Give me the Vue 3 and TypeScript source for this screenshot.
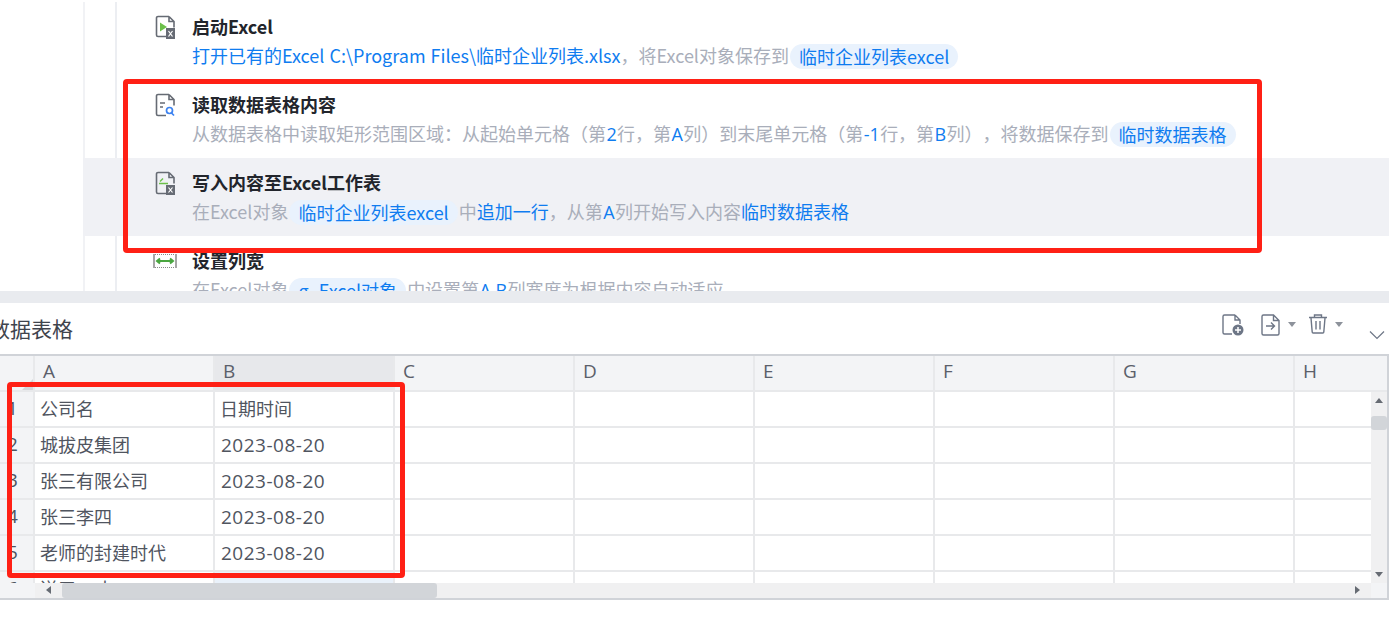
<script setup lang="ts">
const columns = ['A', 'B', 'C', 'D', 'E', 'F', 'G', 'H']
const rows: [string, string, string][] = [
  ['1', '公司名', '日期时间'],
  ['2', '城拔皮集团', '2023-08-20'],
  ['3', '张三有限公司', '2023-08-20'],
  ['4', '张三李四', '2023-08-20'],
  ['5', '老师的封建时代', '2023-08-20'],
  ['6', '送三一丈', '2023-08-20'],
]
const blanks = [0, 1, 2, 3, 4, 5]
</script>

<template>
  <div class="page">
    <section class="flow">
      <div class="guide guide-a"></div>
      <div class="guide guide-b"></div>
      <div class="step">
        <svg class="icon" viewBox="0 0 22 24" width="22" height="24">
          <path d="M14 1.500H3A1.500 1.500 0 0 0 1.500 3v17A1.500 1.500 0 0 0 3 21.500h8M14 1.500l5 5v6M14 1.500v5h5" fill="none" stroke="#666b74" stroke-width="1.600"/>
          <path d="M5 7.500l7 4.500-7 4.500z" fill="#6cc04a"/>
          <rect x="11" y="13" width="9" height="11" fill="#666b74"/>
          <path d="M13.500 16l4 5.500M17.500 16l-4 5.500" stroke="#fff" stroke-width="1.200"/>
        </svg>
        <div class="body">
          <div class="title">启动Excel</div>
          <div class="desc"><span class="b">打开已有的Excel C:\Program Files\临时企业列表.xlsx</span>，将Excel对象保存到<span class="chip">临时企业列表excel</span></div>
        </div>
      </div>
      <div class="step">
        <svg class="icon" viewBox="0 0 22 24" width="22" height="24">
          <path d="M14 1.500H3A1.500 1.500 0 0 0 1.500 3v18A1.500 1.500 0 0 0 3 22.500h8M14 1.500l5 5v6M14 1.500v5h5" fill="none" stroke="#666b74" stroke-width="1.600"/>
          <path d="M5 10h5M5 14h3" stroke="#666b74" stroke-width="1.600"/>
          <circle cx="14.500" cy="17.500" r="3" fill="none" stroke="#3c82f0" stroke-width="1.700"/>
          <path d="M16.500 20l2.500 2.500" stroke="#3c82f0" stroke-width="1.700"/>
        </svg>
        <div class="body">
          <div class="title">读取数据表格内容</div>
          <div class="desc">从数据表格中读取矩形范围区域：从起始单元格（第<span class="b n">2</span>行，第<span class="b n">A</span>列）到末尾单元格（第<span class="b n">-1</span>行，第<span class="b n">B</span>列），将数据保存到<span class="chip">临时数据表格</span></div>
        </div>
      </div>
      <div class="step active">
        <svg class="icon" viewBox="0 0 22 24" width="22" height="24">
          <path d="M14 1.500H3A1.500 1.500 0 0 0 1.500 3v18A1.500 1.500 0 0 0 3 22.500h8M14 1.500l5 5v6M14 1.500v5h5" fill="none" stroke="#666b74" stroke-width="1.600"/>
          <path d="M4 12.500h9" stroke="#6cc04a" stroke-width="1.500"/>
          <path d="M5 10.500l3-3" stroke="#6cc04a" stroke-width="1.500"/>
          <rect x="11" y="14" width="9" height="10" fill="#666b74"/>
          <path d="M13.500 16.500l4 5M17.500 16.500l-4 5" stroke="#fff" stroke-width="1.200"/>
        </svg>
        <div class="body">
          <div class="title">写入内容至Excel工作表</div>
          <div class="desc">在Excel对象<span class="chip">临时企业列表excel</span>中<span class="b">追加一行</span>，从第<span class="b n">A</span>列开始写入内容<span class="b">临时数据表格</span></div>
        </div>
      </div>
      <div class="step">
        <svg class="icon icon-wide" viewBox="0 0 24 16" width="24" height="16">
          <path d="M1 1v14M23 1v14" stroke="#777" stroke-width="1.300"/>
          <path d="M2 1.500h20M2 14.500h20" stroke="#888" stroke-width="1" stroke-dasharray="1 1"/>
          <path d="M4 8h16" stroke="#4aa640" stroke-width="2"/>
          <path d="M7 5.500L4 8l3 2.500M17 5.500L20 8l-3 2.500" fill="none" stroke="#4aa640" stroke-width="2"/>
        </svg>
        <div class="body">
          <div class="title">设置列宽</div>
          <div class="desc">在Excel对象<span class="chip">g_Excel对象</span>中设置第<span class="b n">A,B</span>列宽度为根据内容自动适应</div>
        </div>
      </div>
    </section>

    <div class="splitter"></div>

    <section class="panel">
      <header class="panel-head">
        <h2>数据表格</h2>
        <div class="tools">
          <svg class="tool" viewBox="0 0 22 22" width="22" height="22">
            <path d="M13 1H2.500A1.500 1.500 0 0 0 1 2.500v16A1.500 1.500 0 0 0 2.500 20H10M13 1l5 5v4M13 1v5h5" fill="none" stroke="#6d7686" stroke-width="1.400"/>
            <circle cx="16" cy="16" r="5.500" fill="#6d7686"/>
            <path d="M16 13v6M13 16h6" stroke="#fff" stroke-width="1.500"/>
          </svg>
          <svg class="tool tool-b" viewBox="0 0 20 22" width="20" height="22">
            <path d="M12.500 1H2.500A1.500 1.500 0 0 0 1 2.500v17A1.500 1.500 0 0 0 2.500 21h14a1.500 1.500 0 0 0 1.500-1.500V6.500zM12.500 1v5.500H18" fill="none" stroke="#6d7686" stroke-width="1.400"/>
            <path d="M5 12h8M10 8.500l3.500 3.500-3.500 3.500" fill="none" stroke="#6d7686" stroke-width="1.400"/>
          </svg>
          <i class="caret"></i>
          <svg class="tool tool-c" viewBox="0 0 20 20" width="20" height="20">
            <path d="M1 3.500h18M6.500 3V1h7v2M3 4l1.200 14a1 1 0 0 0 1 1h9.600a1 1 0 0 0 1-1L17 4M8 7v8.500M12 7v8.500" fill="none" stroke="#6d7686" stroke-width="1.400"/>
          </svg>
          <i class="caret"></i>
          <svg class="chev" viewBox="0 0 16 10" width="16" height="10">
            <path d="M1 1.500l7 7 7-7" fill="none" stroke="#6d7686" stroke-width="1.200"/>
          </svg>
        </div>
      </header>

      <div class="grid">
        <div class="grid-row head">
          <div class="rowno corner"><i class="tri"></i></div>
          <div v-for="c in columns" :key="c" class="cell" :class="{ sel: c === 'B' }">{{ c }}</div>
        </div>
        <div v-for="r in rows" :key="r[0]" class="grid-row">
          <div class="rowno">{{ r[0] }}</div>
          <div class="cell">{{ r[1] }}</div>
          <div class="cell" :class="{ pale: r[0] === '6', date: r[0] !== '1' }">{{ r[2] }}</div>
          <div v-for="b in blanks" :key="b" class="cell"></div>
        </div>

        <div class="vbar">
          <i class="arrow up"></i>
          <i class="vthumb"></i>
          <i class="arrow down"></i>
        </div>
        <div class="hbar">
          <i class="arrow left"></i>
          <i class="hthumb"></i>
          <i class="arrow right"></i>
        </div>
        <div class="sb-corner"></div>
      </div>
    </section>

    <div class="mark mark-a"></div>
    <div class="mark mark-b"></div>
  </div>
</template>

<style scoped>
.page {
  position: relative;
  width: 1389px;
  height: 617px;
  overflow: hidden;
  background: #fff;
  font-family: "Noto Sans CJK SC", "Open Sans", sans-serif;
  color: #4a4f59;
  text-spacing-trim: space-all;
}
.flow {
  position: relative;
  height: 291px;
  padding-top: 2px;
  box-sizing: border-box;
  overflow: hidden;
}
.guide {
  position: absolute;
  top: 2px;
  bottom: 0;
  width: 2px;
  background: #eceef2;
}
.guide-a { left: 83px; background: #f1f2f5; }
.guide-b { left: 115px; }
.step {
  position: relative;
  display: flex;
  height: 78px;
  margin-left: 83px;
  padding-left: 72px;
  box-sizing: border-box;
}
.step.active { background: #f0f1f5; }
.icon { margin-top: 13px; flex: none; }
.icon-wide { margin-top: 17px; margin-left: -2px; }
.body { margin-left: 15px; }
.title {
  margin-top: 11px;
  height: 27px;
  line-height: 26px;
  font-size: 18px;
  font-weight: 700;
  color: #22252c;
  white-space: nowrap;
}
.desc {
  height: 30px;
  line-height: 30px;
  font-size: 18px;
  color: #a9aeba;
  white-space: nowrap;
  word-spacing: 1px;
}
.b { color: #0f7cf0; }
.n { font-family: "Open Sans", sans-serif; margin: 0 0.4px; }
.chip {
  display: inline-block;
  height: 25px;
  line-height: 25px;
  padding: 0 9px;
  border-radius: 13px;
  background: #e9f2fd;
  color: #0f7cf0;
  vertical-align: -1px;
  margin: 0 1px;
}
.splitter { height: 12px; background: #e9ebef; }
.panel { height: 297px; margin-left: -14px; }
.panel-head {
  display: flex;
  justify-content: space-between;
  height: 51px;
}
.panel-head h2 {
  margin: 0 0 0 3px;
  padding-top: 10px;
  font-size: 21px;
  line-height: 30px;
  font-weight: 400;
  color: #3f444d;
}
.tools {
  display: flex;
  align-items: flex-start;
  padding-top: 11px;
  padding-right: 4px;
}
.tool-b { margin-left: 17px; }
.tool-c { margin-left: 12px; }
.caret {
  width: 0;
  height: 0;
  margin: 8px 0 0 7px;
  border: 4.500px solid transparent;
  border-top: 5px solid #8d929b;
  border-bottom: 0;
}
.chev { margin: 16px 0 0 26px; }
.grid {
  position: relative;
  height: 246px;
  box-sizing: border-box;
  border-top: 2px solid #d0d3d8;
  border-bottom: 2px solid #d0d3d8;
  border-right: 2px solid #d0d3d8;
  overflow: hidden;
  font-size: 18px;
}
.grid-row {
  display: flex;
  height: 36px;
  box-sizing: border-box;
  border-bottom: 2px solid #e8e9eb;
}
.grid-row.head { background: #f3f4f6; height: 36px; }
.rowno {
  position: relative;
  flex: none;
  width: 49px;
  box-sizing: border-box;
  padding-left: 6px;
  background: #f3f4f6;
  border-right: 2px solid #e8e9eb;
  text-align: center;
  line-height: 33px;
  font-size: 19px;
  color: #4f545e;
  font-family: "Open Sans", sans-serif;
}
.cell {
  flex: none;
  width: 180px;
  box-sizing: border-box;
  padding-left: 5px;
  border-right: 2px solid #e8e9eb;
  line-height: 33px;
  color: #50555f;
  white-space: nowrap;
}
.cell.date { font-family: "Open Sans", sans-serif; font-size: 19px; letter-spacing: 0.5px; padding-left: 6px; line-height: 34px; }
.head .cell { padding-left: 8px; color: #5b606a; font-family: "Open Sans", sans-serif; font-size: 19px; line-height: 31px; }
.cell.sel { background: #e7e8eb; }
.cell.pale { background: #eaf2fb; }
.tri {
  position: absolute;
  right: 0;
  bottom: 0;
  width: 0;
  height: 0;
  border-left: 11px solid transparent;
  border-bottom: 11px solid #d4d6da;
}
.vbar {
  position: absolute;
  top: 36px;
  right: 0;
  bottom: 15px;
  width: 16px;
  background: #f0f0f1;
}
.hbar {
  position: absolute;
  left: 0;
  right: 16px;
  bottom: 0;
  height: 15px;
  background: linear-gradient(90deg, #f3f4f6 49px, #f0f0f1 49px);
}
.sb-corner {
  position: absolute;
  right: 0;
  bottom: 0;
  width: 16px;
  height: 15px;
  background: #f3f4f6;
}
.vthumb {
  position: absolute;
  left: 0;
  top: 24px;
  width: 16px;
  height: 14px;
  border-radius: 3px;
  background: #d2d5d9;
}
.hthumb {
  position: absolute;
  left: 76px;
  top: 0;
  width: 375px;
  height: 15px;
  border-radius: 3px;
  background: #d2d5d9;
}
.arrow { position: absolute; width: 0; height: 0; border: 4px solid transparent; }
.arrow.up { left: 4px; top: 6px; border-top: 0; border-bottom: 5px solid #666b73; }
.arrow.down { left: 4px; bottom: 6px; border-bottom: 0; border-top: 5px solid #666b73; }
.arrow.left { left: 60px; top: 3px; border-left: 0; border-right: 5px solid #666b73; }
.arrow.right { right: 11px; top: 3px; border-right: 0; border-left: 5px solid #666b73; }
.mark {
  position: absolute;
  box-sizing: border-box;
  border: 5px solid #ff2015;
  border-radius: 4px;
  pointer-events: none;
}
.mark-a { left: 123px; top: 79px; width: 1139px; height: 174px; }
.mark-b { left: 7px; top: 382px; width: 398px; height: 196px; }
</style>
